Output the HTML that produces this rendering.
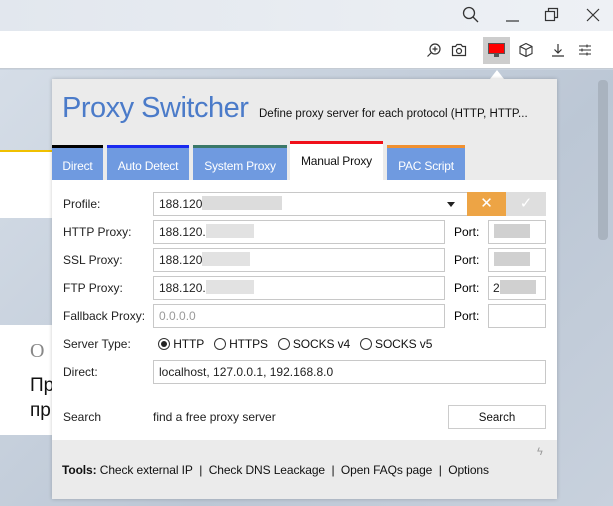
<!DOCTYPE html>
<html><head><meta charset="utf-8"><style>
*{box-sizing:border-box;margin:0;padding:0}
body{width:613px;height:506px;overflow:hidden;position:relative;font-family:"Liberation Sans",Arial,sans-serif;font-size:12px;background:#c9d3df}
.abs{position:absolute}
.inp{position:absolute;background:#fff;border:1px solid #c8c8c8;height:24px;padding-left:5px;line-height:22px;font-size:12px;color:#222}
.lbl{position:absolute;left:63px;color:#222}
.tab{position:absolute;top:145px;height:35px;background:#6f9ae0;color:#fff;text-align:center;line-height:36px;font-size:12px;border-top:3px solid;letter-spacing:-0.2px}
.blur{display:inline-block;height:14px;vertical-align:-2px}
svg{position:absolute}
</style></head><body>
<div class="abs" style="left:0;top:0;width:613px;height:31px;background:linear-gradient(90deg,#e2e7ee,#eef1f5)"></div>
<div class="abs" style="left:0;top:31px;width:613px;height:38px;background:#fff;border-bottom:1px solid #c5cbd3"></div>
<div class="abs" style="left:0;top:70px;width:613px;height:436px;background:linear-gradient(135deg,#d5dde7,#bcc7d5 60%,#c8d1dd)"></div>
<div class="abs" style="left:0;top:150px;width:60px;height:68px;background:#fff;border-top:2px solid #f0c000"></div>
<div class="abs" style="left:0;top:325px;width:60px;height:110px;background:#fff"></div>
<div class="abs" style="left:30px;top:340px;font-size:20px;color:#888;font-family:'Liberation Serif',serif">O</div>
<div class="abs" style="left:30px;top:375px;font-size:19px;color:#111">Пр</div>
<div class="abs" style="left:30px;top:400px;font-size:19px;color:#111">пр</div>
<div class="abs" style="left:598px;top:80px;width:10px;height:160px;background:#a9b3bf;border-radius:4px"></div>
<svg style="left:462px;top:6px" width="18" height="18" fill="none" stroke="#333" stroke-width="1.3"><circle cx="7" cy="7" r="5.5"/><path d="M11 11l5 5"/></svg>
<svg style="left:505px;top:8px" width="16" height="16" stroke="#333" stroke-width="1.2"><path d="M1 13h13"/></svg>
<svg style="left:544px;top:7px" width="16" height="16" fill="none" stroke="#333" stroke-width="1.2"><rect x="1.5" y="4.5" width="9" height="9"/><path d="M4.5 4.5V1.5h9v9h-3"/></svg>
<svg style="left:585px;top:7px" width="16" height="16" stroke="#333" stroke-width="1.2"><path d="M2 2l12 12M14 2L2 14"/></svg>
<svg style="left:426px;top:42px" width="16" height="16" fill="none" stroke="#333" stroke-width="1.2"><circle cx="9" cy="7" r="5"/><path d="M9 4.5v5M6.5 7h5M5.5 10.5L1.5 14.5"/></svg>
<svg style="left:451px;top:42px" width="16" height="16" fill="none" stroke="#333" stroke-width="1.2"><path d="M1.5 4.5h3l1.5-2h4l1.5 2h3v9h-13z"/><circle cx="8" cy="9" r="2.5"/></svg>
<div class="abs" style="left:483px;top:37px;width:27px;height:27px;background:#cdcdcd"></div>
<div class="abs" style="left:488px;top:43px;width:17px;height:11px;background:#f00;border:1px solid #555"></div>
<div class="abs" style="left:494px;top:54px;width:5px;height:3px;background:#555"></div>
<svg style="left:518px;top:42px" width="16" height="16" fill="none" stroke="#333" stroke-width="1.1"><path d="M8 1.5l6 3v7l-6 3-6-3v-7zM2 4.5l6 3 6-3M8 7.5v7"/></svg>
<svg style="left:550px;top:42px" width="16" height="16" fill="none" stroke="#333" stroke-width="1.2"><path d="M8 2v9M4.5 7.5L8 11l3.5-3.5M2 14h12"/></svg>
<svg style="left:577px;top:42px" width="16" height="16" fill="none" stroke="#333" stroke-width="1.1"><path d="M2 4h12M2 8h12M2 12h12M10 2.5v3M5 6.5v3M10 10.5v3"/></svg>
<div class="abs" style="left:490px;top:70px;width:0;height:0;border-left:7px solid transparent;border-right:7px solid transparent;border-bottom:9px solid #fff"></div>
<div class="abs" style="left:52px;top:79px;width:505px;height:420px;background:#ebebeb;box-shadow:0 0 4px rgba(0,0,0,.2)"></div>
<div class="abs" style="left:62px;top:92px;font-size:29px;color:#4b7bc9;letter-spacing:-0.5px">Proxy Switcher</div>
<div class="abs" style="left:259px;top:108px;font-size:11.5px;color:#111">Define proxy server for each protocol (HTTP, HTTP...</div>
<div class="tab" style="left:52px;width:51px;border-color:#000">Direct</div>
<div class="tab" style="left:107px;width:82px;border-color:#1a2af0">Auto Detect</div>
<div class="tab" style="left:193px;width:94px;border-color:#3a7868">System Proxy</div>
<div class="tab" style="left:290px;top:141px;height:40px;width:93px;background:#fff;color:#111;border-color:#f0101a;line-height:34px">Manual Proxy</div>
<div class="tab" style="left:387px;width:78px;border-color:#f09030">PAC Script</div>
<div class="abs" style="left:52px;top:180px;width:505px;height:260px;background:#fff"></div>
<div class="lbl" style="top:197px">Profile:</div>
<div class="inp" style="left:153px;top:192px;width:315px">188.120<span class="blur" style="width:80px;background:#dcdcdc"></span></div>
<div class="abs" style="left:447px;top:202px;border-left:4px solid transparent;border-right:4px solid transparent;border-top:5px solid #222"></div>
<div class="abs" style="left:467px;top:192px;width:39px;height:24px;background:#eda445;color:#fff;text-align:center;line-height:24px;font-size:15px">✕</div>
<div class="abs" style="left:506px;top:192px;width:40px;height:24px;background:#dedede;color:#fff;text-align:center;line-height:24px;font-size:15px">✓</div>
<div class="lbl" style="top:225px">HTTP Proxy:</div>
<div class="inp" style="left:153px;top:220px;width:292px">188.120.<span class="blur" style="width:48px;background:#e2e2e2"></span></div>
<div class="lbl" style="top:253px">SSL Proxy:</div>
<div class="inp" style="left:153px;top:248px;width:292px">188.120<span class="blur" style="width:48px;background:#e2e2e2"></span></div>
<div class="lbl" style="top:281px">FTP Proxy:</div>
<div class="inp" style="left:153px;top:276px;width:292px">188.120.<span class="blur" style="width:48px;background:#e2e2e2"></span></div>
<div class="lbl" style="top:309px">Fallback Proxy:</div>
<div class="inp" style="left:153px;top:304px;width:292px;color:#999">0.0.0.0</div>
<div class="abs" style="left:454px;top:225px">Port:</div>
<div class="abs" style="left:454px;top:253px">Port:</div>
<div class="abs" style="left:454px;top:281px">Port:</div>
<div class="abs" style="left:454px;top:309px">Port:</div>
<div class="inp" style="left:488px;top:220px;width:58px"><span class="blur" style="width:36px;background:#d0d0d0"></span></div>
<div class="inp" style="left:488px;top:248px;width:58px"><span class="blur" style="width:36px;background:#d0d0d0"></span></div>
<div class="inp" style="left:488px;top:276px;width:58px;padding-left:4px">2<span class="blur" style="width:36px;background:#d0d0d0"></span></div>
<div class="inp" style="left:488px;top:304px;width:58px"></div>
<div class="lbl" style="top:337px">Server Type:</div>
<div class="abs" style="left:158px;top:337px;color:#111;letter-spacing:-0.1px">
<span style="display:inline-block;width:12px;height:12px;border:1px solid #333;border-radius:50%;vertical-align:-2px;position:relative"><span style="position:absolute;left:2px;top:2px;width:6px;height:6px;background:#222;border-radius:50%"></span></span> HTTP&nbsp;&nbsp;
<span style="display:inline-block;width:12px;height:12px;border:1px solid #333;border-radius:50%;vertical-align:-2px"></span> HTTPS&nbsp;&nbsp;
<span style="display:inline-block;width:12px;height:12px;border:1px solid #333;border-radius:50%;vertical-align:-2px"></span> SOCKS v4&nbsp;&nbsp;
<span style="display:inline-block;width:12px;height:12px;border:1px solid #333;border-radius:50%;vertical-align:-2px"></span> SOCKS v5</div>
<div class="lbl" style="top:365px">Direct:</div>
<div class="inp" style="left:153px;top:360px;width:393px">localhost, 127.0.0.1, 192.168.8.0</div>
<div class="lbl" style="top:410px">Search</div>
<div class="abs" style="left:153px;top:410px;color:#222">find a free proxy server</div>
<div class="abs" style="left:448px;top:405px;width:98px;height:24px;border:1px solid #ccc;text-align:center;line-height:25px;font-size:11.5px;color:#111">Search</div>
<div class="abs" style="left:537px;top:446px;color:#999;font-size:11px">ϟ</div>
<div class="abs" style="left:62px;top:463px;color:#111;letter-spacing:-0.1px"><b>Tools:</b> Check external IP&nbsp; |&nbsp; Check DNS Leackage&nbsp; |&nbsp; Open FAQs page&nbsp; |&nbsp; Options</div>
</body></html>
